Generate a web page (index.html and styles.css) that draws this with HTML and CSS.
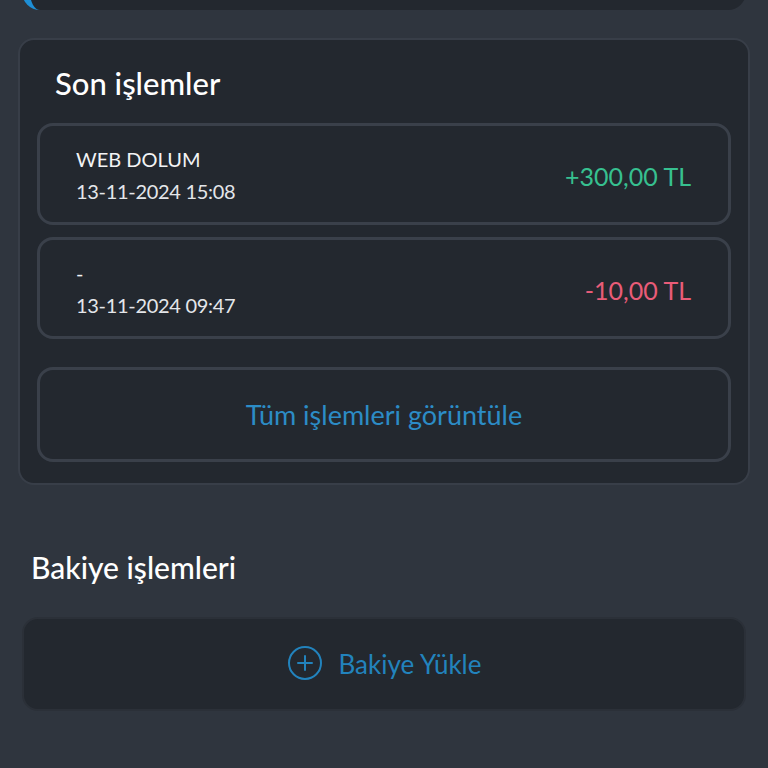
FILE: index.html
```html
<!DOCTYPE html>
<html lang="tr">
  <head>
    <meta charset="UTF-8" />
    <meta name="viewport" content="width=device-width, initial-scale=1.0" />
    <title>Cüzdan</title>
    <link rel="stylesheet" href="styles.css">
  </head>
  <body>
    <div class="page">
      <!-- balance card, mostly scrolled out of view -->
      <div class="balance-card"></div>

      <section class="card">
        <h2 class="card-title">Son işlemler</h2>

        <div class="tx-list">
          <div class="tx">
            <div class="tx-info">
              <div class="tx-name">WEB DOLUM</div>
              <div class="tx-date">13-11-2024 15:08</div>
            </div>
            <div class="tx-amount plus">+300,00 TL</div>
          </div>
          <div class="tx">
            <div class="tx-info">
              <div class="tx-name">-</div>
              <div class="tx-date">13-11-2024 09:47</div>
            </div>
            <div class="tx-amount minus">-10,00 TL</div>
          </div>
        </div>

        <button type="button" class="all-btn">Tüm işlemleri görüntüle</button>
      </section>

      <h2 class="section-title">Bakiye işlemleri</h2>

      <button type="button" class="topup-btn">
        <svg class="plus-icon" width="36" height="36" viewBox="0 0 36 36">
          <circle cx="18" cy="18" r="16" fill="none" stroke="currentColor" stroke-width="2" />
          <path d="M18 11v14M11 18h14" stroke="currentColor" stroke-width="2" stroke-linecap="round" />
        </svg>
        <span>Bakiye Yükle</span>
      </button>
    </div>
  </body>
</html>
```

FILE: styles.css
```css
body {
  margin: 0;
  background-color: #2f353e;
  font-family: "Lato", "Open Sans", sans-serif;
  color: #ffffff;
}

.page {
  padding: 0 18px 40px 18px;
}

.balance-card {
  height: 60px;
  margin: -50px 4px 0 4px;
  background-color: #23282f;
  border-left: 8px solid #1e8fd6;
  border-radius: 0 0 18px 18px;
}

.card {
  margin-top: 28px;
  background-color: #23282f;
  border: 2px solid #383e48;
  border-radius: 16px;
  padding: 0 17px 21px 17px;
}

.card-title {
  margin: 0;
  padding: 26px 0 23px 18px;
  font-size: 31px;
  font-weight: 500;
  line-height: 34px;
}

.tx-list {
  display: flex;
  flex-direction: column;
  gap: 12px;
}

.tx {
  display: flex;
  align-items: center;
  justify-content: space-between;
  height: 102px;
  box-sizing: border-box;
  border: 3px solid #3a404a;
  border-radius: 16px;
  padding: 0 37px 0 36px;
}

.tx-info {
  display: flex;
  flex-direction: column;
  gap: 8px;
  padding-top: 2px;
}

.tx-name {
  font-size: 20px;
  line-height: 24px;
  color: #f2f3f5;
}

.tx-date {
  font-size: 20px;
  line-height: 24px;
  color: #e4e6ea;
  letter-spacing: -0.3px;
}

.tx-amount {
  font-size: 25px;
  padding-top: 4px;
}

.plus {
  color: #37c090;
}

.minus {
  color: #e95c78;
}

.all-btn {
  display: block;
  width: 100%;
  height: 95px;
  margin-top: 28px;
  background-color: #23282f;
  border: 3px solid #3a404a;
  border-radius: 16px;
  color: #2c8cc6;
  font-family: "Lato", "Open Sans", sans-serif;
  font-size: 27px;
  cursor: pointer;
}

.section-title {
  margin: 0;
  padding: 62px 0 0 13px;
  font-size: 30px;
  font-weight: 500;
  line-height: 40px;
}

.topup-btn {
  display: flex;
  align-items: center;
  justify-content: center;
  gap: 16px;
  width: calc(100% - 8px);
  height: 94px;
  margin: 30px 4px 0 4px;
  background-color: #23282f;
  border: 2px solid #2b3038;
  border-radius: 16px;
  color: #2283bd;
  font-family: "Lato", "Open Sans", sans-serif;
  font-size: 26px;
  cursor: pointer;
}

.plus-icon {
  margin-top: -2px;
}
```
